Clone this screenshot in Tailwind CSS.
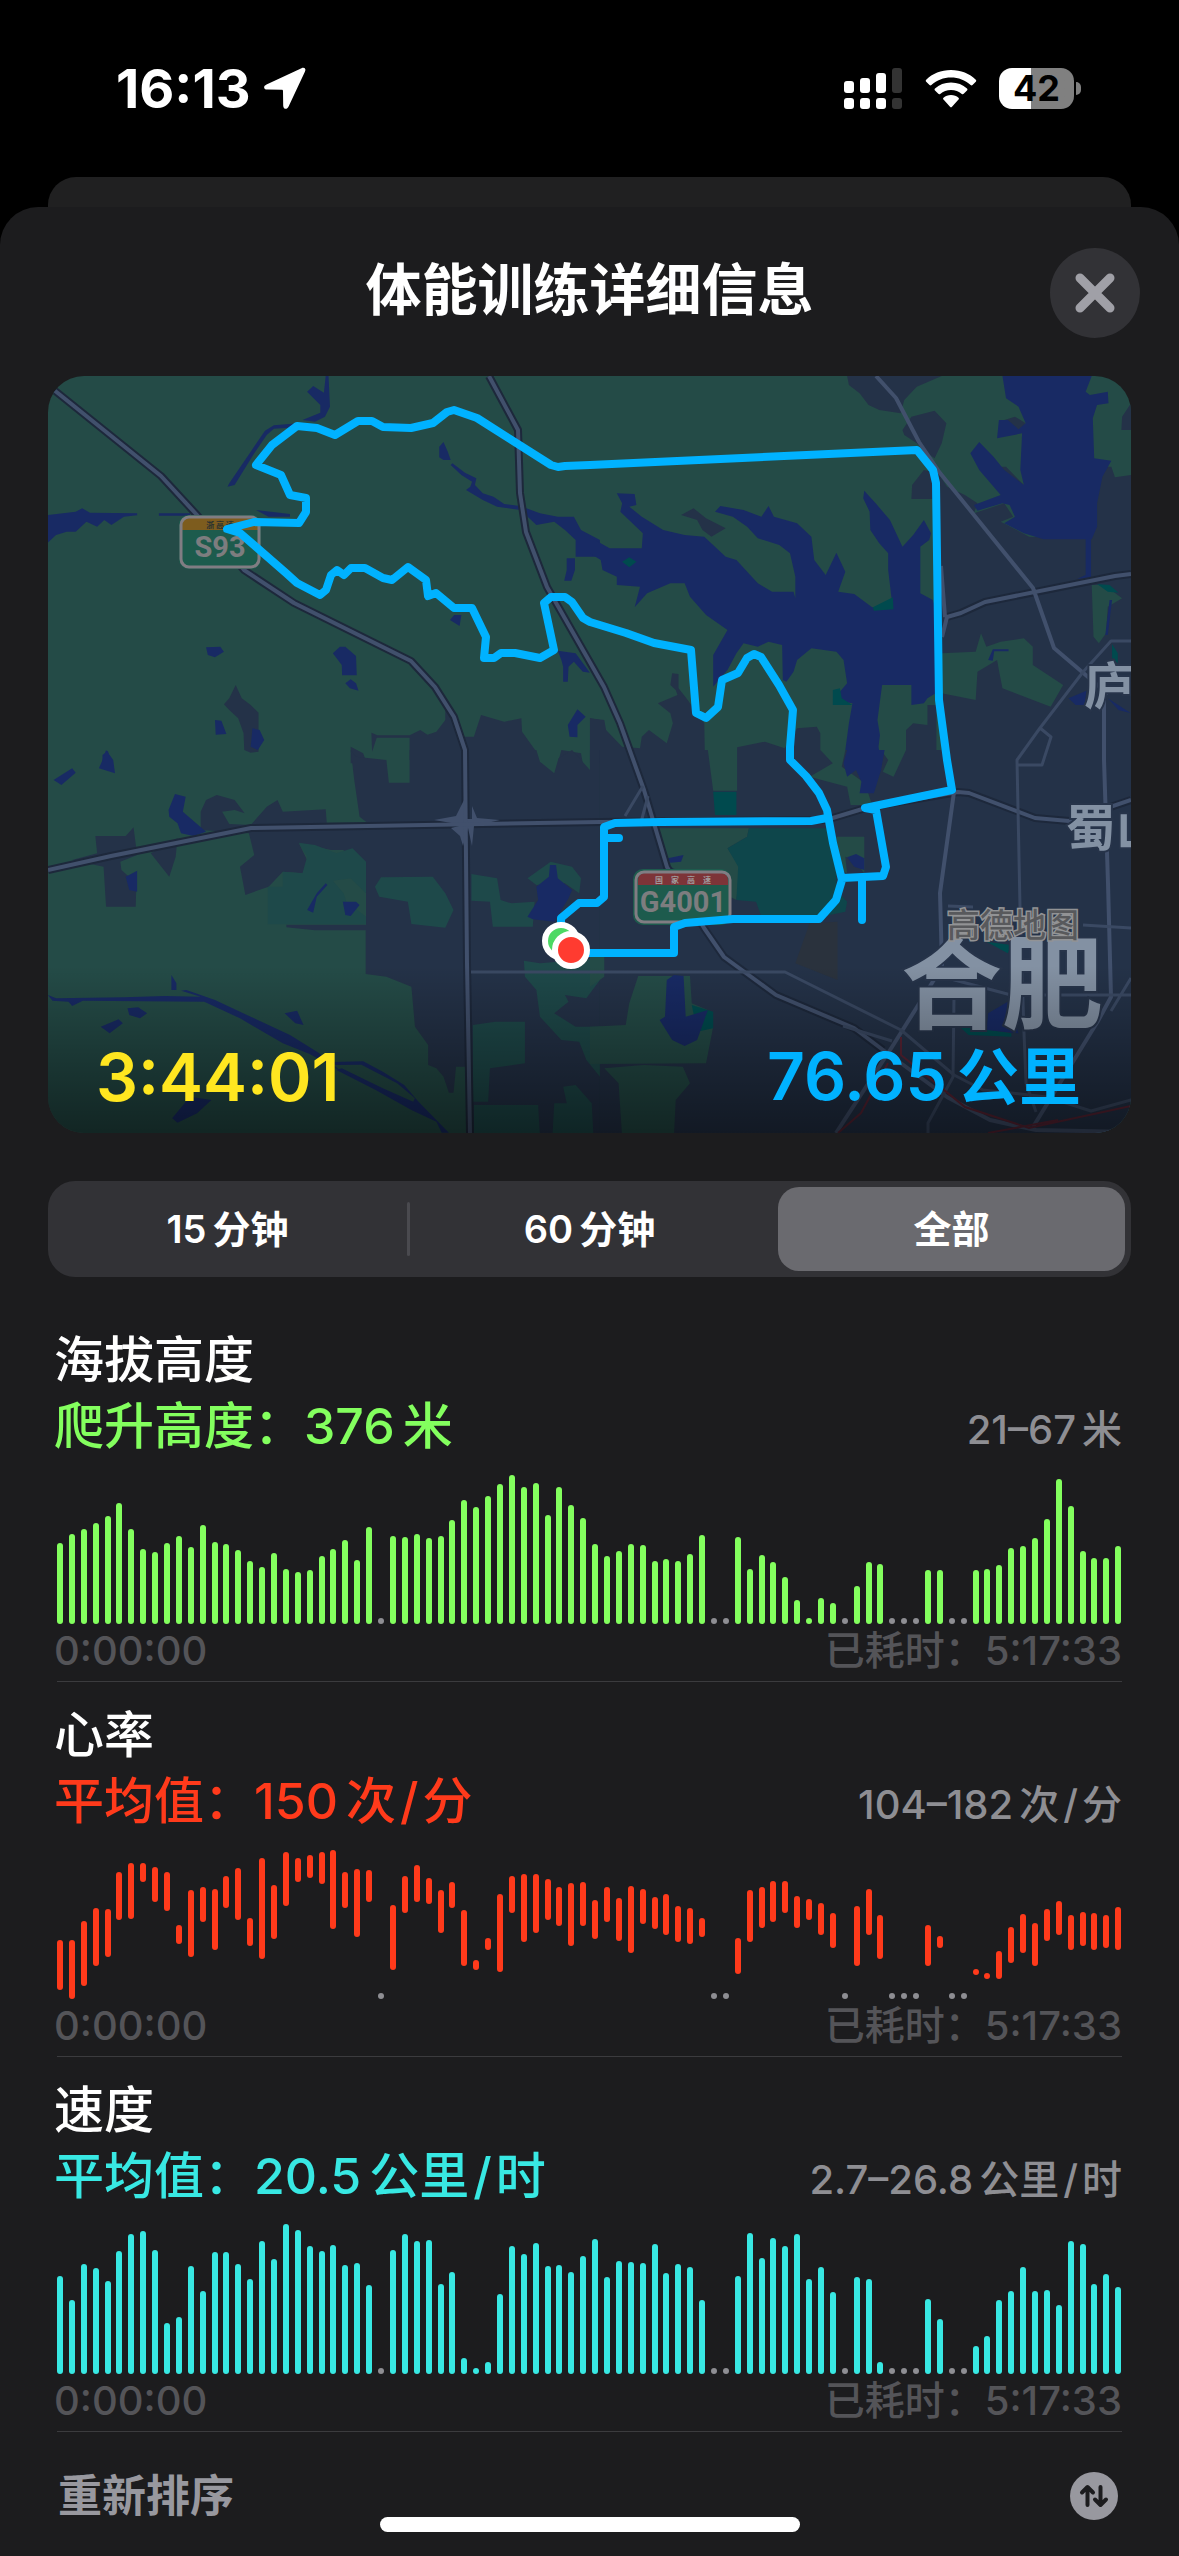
<!DOCTYPE html>
<html lang="zh-CN">
<head>
  <meta charset="UTF-8" />
  <meta name="viewport" content="width=device-width, initial-scale=1.0"/>
  <title>体能训练详细信息</title>
  <script src="https://cdn.jsdelivr.net/npm/@tailwindcss/browser@4"></script>
</head>
<body class="bg-black text-white min-h-screen flex flex-col font-['Inter','Noto_Sans_CJK_SC',sans-serif]">

  <!-- Status bar -->
  <div class="h-[177px] pl-[116px] pr-[98px] flex items-center justify-between">
    <div class="flex items-center gap-3">
      <span class="text-[54px] leading-[60px] font-bold">16:13</span>
      <svg class="w-[43px] h-[43px]" viewBox="0 0 43 43" fill="#fff"><path d="M38.500 1.200 L3.500 17.500 C0 19.200 .5 22.500 4.200 22.600 L18.500 22.800 C19.600 22.800 20 23.200 20 24.300 L20.200 38.500 C20.300 42.500 24 43 25.600 39.500 L42 4.500 C43.300 1.500 41.200 0 38.500 1.200z"/></svg>
    </div>
    <div class="flex items-center gap-[22px]">
      <svg class="w-[59px] h-[41px]" viewBox="0 0 59 41" fill="#fff">
        <rect x="0" y="13" width="10" height="12" rx="3"/><rect x="16" y="10" width="10" height="15" rx="3"/><rect x="32" y="5" width="10" height="20" rx="3"/>
        <rect x="48" y="0" width="10" height="25" rx="3" fill="#333"/>
        <rect x="0" y="30" width="10" height="11" rx="3"/><rect x="16" y="30" width="10" height="11" rx="3"/><rect x="32" y="30" width="10" height="11" rx="3"/>
        <rect x="48" y="30" width="10" height="11" rx="3" fill="#333"/>
      </svg>
      <svg class="w-[52px] h-[38px]" viewBox="0 0 52 38" fill="#fff">
        <path d="M26 0 C36 0 44.500 3.500 50.800 9.800 C51.400 10.400 51.400 11.200 50.800 11.800 L47.500 15 C46.900 15.600 46.200 15.600 45.600 15 C40 10 33.500 7.500 26 7.500 C18.500 7.500 12 10 6.400 15 C5.800 15.600 5.100 15.600 4.500 15 L1.200 11.800 C.6 11.200 .6 10.400 1.200 9.800 C7.500 3.500 16 0 26 0z"/>
        <path d="M26 12.500 C32.500 12.500 37.800 14.700 42 18.600 C42.600 19.200 42.600 20 42 20.600 L38.700 23.800 C38.100 24.400 37.400 24.400 36.800 23.900 C33.800 21.300 30.200 19.900 26 19.900 C21.800 19.900 18.200 21.300 15.200 23.900 C14.600 24.400 13.900 24.400 13.300 23.800 L10 20.600 C9.400 20 9.400 19.200 10 18.600 C14.200 14.700 19.500 12.500 26 12.500z"/>
        <path d="M26 25 C29 25 31.500 26 33.500 27.700 C34.100 28.300 34.100 29 33.500 29.600 L27 36.800 C26.400 37.500 25.600 37.500 25 36.800 L18.500 29.600 C17.900 29 17.900 28.300 18.500 27.700 C20.500 26 23 25 26 25z"/>
      </svg>
      <div class="flex items-center gap-0.5">
        <div class="w-[75px] h-[41px] rounded-[13px] bg-linear-to-r from-white from-43% to-[#808080] to-43% flex items-center justify-center text-black text-[36px] leading-[41px] font-bold">42</div>
        <div class="w-[5px] h-[13px] rounded-r-full bg-[#808080]"></div>
      </div>
    </div>
  </div>

  <!-- Sheet behind -->
  <div class="h-[30px] mx-12 rounded-t-[28px] bg-[#202021]"></div>

  <!-- Workout sheet -->
  <div class="grow rounded-t-[38px] bg-[#1c1c1e] pb-9">
    <header class="grid grid-cols-[1fr_auto_1fr] items-center px-[39px] pt-[41px] pb-[38px]">
      <h1 class="col-start-2 pb-1.5 text-[56px] leading-[80px] font-bold">体能训练详细信息</h1>
      <button type="button" aria-label="关闭" class="justify-self-end size-[90px] rounded-full bg-[#323236] flex items-center justify-center">
        <svg class="size-[40px]" viewBox="0 0 40 40" fill="none" stroke="#a0a0a7" stroke-width="9" stroke-linecap="round"><path d="M5 5 35 35M35 5 5 35"/></svg>
      </button>
    </header>

    <main class="px-12">
      <!-- Route map -->
      <div class="relative aspect-[1083/757] rounded-[36px] overflow-hidden bg-[#244b47]">
        <svg class="block w-full h-full" viewBox="0 0 1083 757" preserveAspectRatio="xMidYMid slice">
          <defs>
            <linearGradient id="shade" x1="0" y1="0" x2="0" y2="1">
              <stop offset="0" stop-color="#000" stop-opacity="0"/>
              <stop offset="1" stop-color="#000" stop-opacity=".5"/>
            </linearGradient>
          </defs>

          <!-- north-west tile -->
          <g transform="translate(-8 -6) scale(.3571 .3333)">
            <path fill="#243248" d="M548 945 530 985 515 1003 530 1020 555 1045 570 1090 572 1140 590 1148 612 1145 612 1028 590 1005 565 985zM928 1088 945 1096 1035 1096 1065 1080 1085 1094 1110 1085 1135 1050 1135 1020 1160 1050 1170 1100 1215 1100 1235 1035 1300 1055 1348 1045 1350 1085 1390 1145 1390 1170H1035V1103H943L930 1145zM870 1130 905 1150 915 1180 870 1180zM1540 1045 1568 1050V1180H1540zM1450 1180 1460 1140 1515 1150 1520 1180z"/>
            <g fill="#182a64">
              <path d="M22 435 100 425 118 415 140 428 272 430 272 436 235 440 200 465 180 450 160 470 130 455 100 485 75 485 45 495 22 518zM333 430H420V437H333zM605 420 700 432 700 440 640 440zM800 18H808L812 110 798 140 770 155 735 150 785 128 785 105 748 65 765 48 795 68z"/>
              <path d="M1118 230 1130 216 1142 245 1150 270 1130 270 1118 262zM1193 360 1205 350 1210 335 1180 315 1150 285 1155 280 1190 308 1222 325 1218 345 1240 370 1270 380 1300 402 1345 408 1400 430 1450 440 1495 440 1515 480 1568 510V560H1500V510L1470 480 1440 455 1390 465 1370 445 1345 420 1280 410 1240 390zM1475 565H1498V600L1488 632H1468L1475 600z"/>
              <path d="M1148 750 1175 768 1180 735 1160 735zM465 832 505 830 515 845 490 862 470 855zM820 850 840 830 855 830 885 858 887 916 846 916 845 885zM855 940 870 928 885 940 892 962 868 955zM1450 842 1500 850 1540 908 1520 905 1495 875 1480 890 1478 935 1465 935 1465 890 1460 870zM1478 1065 1505 1018 1528 1040 1505 1065 1505 1102 1483 1100zM490 1050 508 1052 522 1092 492 1094zM595 1075 615 1080 628 1110 610 1140 590 1130zM175 1155 190 1142 200 1180H175z"/>
              <path d="M740 158 L720 172 655 176 635 195 600 250 545 345 525 350 530 340 590 245 630 182 655 166z"/>
            </g>
          </g>

          <!-- north-east tile -->
          <g transform="translate(542 -6) scale(.3571 .3333)">
            <path fill="#243248" d="M720 18 725 45 755 70 780 105 810 120 870 130 880 90 915 50 985 18zM875 180 900 140 965 122 998 160 985 220 965 265 945 250 915 220 880 195zM935 300 902 345 900 387 970 387 970 1170H1515V315L1470 322 1460 290 1400 290 1400 508 1230 500 1150 455 1185 440 1160 400 1075 430 1085 400 1050 375 1000 350 975 310zM1160 150 1200 190 1220 160 1190 140zM1488 180 1490 140 1515 100V180zM1135 290 1165 290 1215 345 1205 360zM255 435 290 415 325 445 380 475 340 500 315 480 300 450zM0 1045 40 1050 45 1080 90 1130 140 1135 145 1100 165 1080 215 1120 232 1060 225 1030 190 1000 245 975 240 960 225 945 230 910 248 912 248 955 270 985 320 1060 322 1180H0zM412 1180V1132L490 1115 545 1135 580 1075 635 1070 645 1090 645 1180zM885 1180V1080L905 1060 945 1065 945 1005H985V1180z"/>
            <path fill="#244b47" d="M985 850 1080 845 1095 790 1110 830 1150 815 1215 805 1240 830 1240 885 1325 945 1290 1010 1155 955 1145 900 1140 870 1085 905 1080 990 985 970zM1405 645H1440L1490 685 1450 710 1445 790 1425 820 1410 800z"/>
            <g fill="#182a64">
              <path d="M0 502 55 535 145 535 148 490 85 425 90 400 75 370 125 372 130 405 110 410 145 440 205 480 265 495 320 500 380 560 410 570 470 640 510 665 570 665 575 685 575 620 560 550 530 525 470 505 440 470 400 440 350 425 365 408 430 420 480 440 500 408 515 440 580 460 620 500 628 570 660 615 690 548 715 605 695 665 740 672 790 712 830 710 845 690 835 600 835 550 810 520 785 480 783 425 765 385 768 362 800 400 840 450 875 530 905 495 935 450 955 490 950 510 925 530 925 670 960 690 975 740 975 965 945 985 935 1000 900 1005 900 945 818 945 805 1050 812 1095 808 1130 815 1180H710L725 1060 735 1000 680 990 720 940 710 870 690 845 620 835 580 870 570 905 550 935 540 930 538 825 500 815 470 830 430 820 410 850 385 900 345 950 345 855 385 780 325 735 280 680 265 640 225 640 160 670 125 712 140 650 75 645 75 620 35 600 30 570 0 550z"/>
              <path d="M1155 18H1405L1388 65 1400 75 1450 65 1452 100 1420 105 1408 145 1412 265 1460 272 1435 320 1420 400 1420 470 1405 508H1403V626H1365L1388 615V508H1270L1215 490 1160 460 1190 440 1175 405 1155 400 1085 422 1075 405 1150 375 1090 300 1065 250 1090 216 1130 260 1160 300 1215 345 1205 300 1210 190 1140 205 1145 150 1170 150 1200 178 1220 160 1200 110 1165 85z"/>
              <path d="M1340 985 1390 962 1385 1005 1360 1005zM1450 985 1515 1030 1480 1020zM1455 690H1462L1450 795H1443zM1115 870 1128 838H1172V844H1132L1128 872z"/>
            </g>
            <path fill="#004a4e" d="M90 575 110 562 130 575 110 592zM792 712 848 682 850 718 795 722zM680 960 700 955 705 985 735 1005 680 1005zM1462 822 1478 850 1478 880 1462 865zM1420 642 1455 645 1480 668 1450 665z"/>
          </g>

          <!-- south-west tile -->
          <g transform="translate(-8 374) scale(.3571 .3333)">
            <path fill="#243248" d="M870 0 885 20 970 30 977 98H1035V0H1390L1400 35 1440 70 1452 25 1490 0 1540 60V0H1568V1160H1195V950H1165L1158 1028H1145L1130 980 1110 955 1087 945 1087 885 1050 830 1040 710 970 680 912 672V541H770L690 532V524H913V215L895 200 880 90zM450 185 465 150 495 135 545 150 573 190 545 180 510 185 530 222 590 225 635 170 665 150 680 185 800 178 803 218 913 218 913 430 850 300 815 300 725 280 748 330 740 370 680 365 640 410 575 435 560 350 600 315 585 250 450 240zM90 330 160 310 155 258H240L262 232 272 315 225 335 228 360 270 400 268 470H185L178 350zM310 310 385 265 380 320 362 380z"/>
            <path fill="#1e494a" d="M725 278 770 285 830 310 875 295 913 335V430L870 385 820 392 850 430 858 455 913 500V523H638V410H680V365L735 370 748 320zM938 410 955 382 1100 380 1135 430 1158 480 1135 533 1040 522 1030 455 950 440zM1208 372 1280 385 1290 450 1320 460 1385 455 1380 530H1268L1260 455 1208 452zM1365 385 1430 335 1490 350 1515 385 1510 430 1470 400 1390 405zM1355 632 1400 640 1568 625V690L1530 745 1470 735 1480 755 1440 790 1500 830 1568 830V980L1530 930 1510 875 1460 870 1400 800 1390 720 1358 680zM1212 825 1275 815H1358V940L1260 955 1255 1055H1212zM1215 1065H1395L1400 1160H1215zM1440 1060 1475 1060 1465 1010 1500 1005 1545 1060 1550 1160H1435z"/>
            <g fill="#182a64">
              <path d="M360 180 378 132 408 140 400 185 465 245 430 258 395 250 385 220 362 200zM240 380 272 362 272 425 250 420zM185 0 205 30 210 70 165 55 175 30zM38 90 90 55 100 68 60 105zM748 480 775 430 800 400 805 405 775 440 765 488zM848 455H885L895 465 870 498 855 495zM1365 500 1395 450 1390 410 1425 380 1428 345 1445 345 1450 385 1490 420 1480 445 1440 515 1380 508z"/>
              <path d="M22 735 45 745 235 742 350 738 450 740 395 722 410 720 490 750 590 800 700 855 780 908 845 965 755 912 680 880 560 805 460 755 120 752 90 768 80 755 35 752zM245 775 275 772 300 790 280 805 250 795zM170 830 220 808 232 820 195 850zM685 790 720 782 738 825 715 820zM370 1105 420 1040 480 1050 440 1090 385 1118zM368 675 382 700 382 720 368 720z"/>
              <path d="M820 936 905 934 960 965 1020 1005 1060 1055 1145 1148 1125 1148 1110 1115 1040 1080 940 1020 830 960 845 955 960 1015 1045 1055 1050 1045 1000 1000 900 944 825 945z"/>
            </g>
          </g>

          <!-- south-east tile -->
          <g transform="translate(542 374) scale(.3571 .3333)">
            <path fill="#243248" d="M28 0H1520V1160H28z"/>
            <path fill="#244b47" d="M330 0H412V122H345zM645 0H715L705 50 770 100 790 165 730 165 720 110 615 80 680 40zM815 0H885L850 80 820 65 835 30zM190 235H445L440 260 385 295 420 350 410 450 225 350zM690 260H768V370L740 330 715 320 720 370 700 360zM0 620H40V680L0 710zM135 678H280L285 760 330 780 345 830 325 940 0 942V830L100 825 110 760zM40 955 150 945 260 950 280 1000 240 1050 235 1160H90L80 1000z"/>
            <path fill="#0e464b" d="M445 235H665L690 370 690 420 720 455 715 485 660 497 480 500 465 455 410 450 415 350 385 295 440 260z"/>
            <path fill="#004a4e" d="M345 125H410V195H350zM1110 575 1180 585 1170 610zM1030 825 1180 850V860L1060 855zM285 765 345 785V835L300 845z"/>
            <path fill="#182a64" d="M215 690 235 675 262 678 268 800 330 780 300 870 265 888 230 870 195 810 210 800zM720 0H825L815 60 795 130 755 130 760 95 745 60 720 80 710 40zM720 322 745 312 768 325V360L740 350zM218 325 262 315 255 335 225 338zM1115 790 1170 755 1200 850 1110 840z"/>
            <path fill="#2a323d" d="M615 520 693 515V690L575 640z"/>
          </g>

          <!-- roads -->
          <g fill="none" stroke="#1d283b" stroke-width="8" stroke-linejoin="round">
            <path d="M6 14 113 100 149 139 196 194 246 227 363 285 387 311 406 341 417 374 419 587 422 757"/>
            <path d="M441 0 470 54 472 117 478 156 499 211 556 311 572 347 596 414 619 491 656 552 676 581 728 619 806 652 835 674"/>
            <path d="M0 494 63 480 203 452 552 446 778 444 821 431 910 416 921 417 987 442 1021 445 1083 424M1083 198 1067 200 937 226 913 237 899 241"/>
          </g>
          <path fill="#41506c" d="M386 444 408 440 416 424V443H424V430L429 442 452 444 426 450 424 470 420 452 415 470 412 460 403 452 415 449z"/>
          <g fill="none" stroke="#41506c" stroke-linejoin="round" stroke-width="4">
            <path d="M6 14 113 100 149 139 196 194 246 227 363 285 387 311 406 341 417 374 419 587 422 757"/>
            <path d="M441 0 470 54 472 117 478 156 499 211 556 311 572 347 596 414 619 491 656 552 676 581 728 619 806 652 835 674 899 721 942 744 988 754 1083 756"/>
            <path d="M0 494 63 480 203 452 552 446 778 444 821 431 910 416 921 417 987 442 1021 445 1083 424"/>
            <path d="M828 0 848 22 871 66 892 97 985 212 1006 272 1060 318M1083 198 1067 200 937 226 913 237 899 241 894 261M893 190 897 241"/>
            <path d="M906 416 892 517 894 591 844 671 788 757M1056 322 1056 384 1060 507 1063 621 1050 645 985 751"/>
          </g>
          <g fill="none" stroke="#3a4963" stroke-linejoin="round" stroke-width="3">
            <path d="M423 596H737L853 654 906 699 935 714 999 721 1043 735 1083 724"/>
            <path d="M1083 265H1063L1035 296 992 352 969 384 972 531 976 657 978 707 988 736M992 352 1003 361 994 389H969"/>
            <path d="M1035 549 1083 552M899 602 963 619 1083 619M906 621 905 701 880 747V757M795 650 844 665M595 410 577 440M600 420 592 450M900 530 925 531M1083 602 1063 635"/>
          </g>
          <path fill="none" stroke="#5a2435" stroke-width="2" d="M853 661V679L917 731 981 752 1083 730M840 687 813 737 790 757M940 757 1010 744"/>

          <!-- place names -->
          <g fill="#8391a3" stroke="#27344a" stroke-width="4" paint-order="stroke" font-family="'Noto Sans CJK SC',sans-serif" font-weight="700">
            <text x="1036" y="328" font-size="50">庐</text>
            <text x="1018" y="470" font-size="50">蜀山</text>
            <text x="853" y="645" font-size="101">合肥</text>
          </g>

          <!-- highway shields -->
          <g font-family="'Liberation Sans Narrow',Roboto,sans-serif" font-weight="700" fill="#7d7d7f" text-anchor="middle">
            <rect x="131" y="139" width="82" height="54" rx="9" fill="#1d5b4d"/>
            <path fill="#7d5c1e" d="M134 154v-5q0-7 8-7h60q8 0 8 7v5z"/>
            <rect x="133" y="141" width="78" height="50" rx="8" fill="none" stroke="#817d83" stroke-width="3"/>
            <text x="172" y="181" font-size="29">S93</text>
            <text x="172" y="152" font-size="8" fill="#2b332f" font-family="'Noto Sans CJK SC',sans-serif">浙 高 速</text>
            <rect x="585" y="493" width="98" height="56" rx="10" fill="#1d5b4d"/>
            <path fill="#7d3438" d="M590 509v-5q0-7 8-7h74q8 0 8 7v5z"/>
            <rect x="588" y="496" width="94" height="50" rx="8" fill="none" stroke="#817d83" stroke-width="3"/>
            <text x="635" y="536" font-size="29">G4001</text>
            <text x="635" y="507" font-size="8" fill="#a09a9c" font-family="'Noto Sans CJK SC',sans-serif">国　家　高　速</text>
          </g>

          <rect y="590" width="1083" height="167" fill="url(#shade)"/>
          <text x="899" y="561" font-size="33" font-weight="500" fill="#58595c" stroke="#929395" stroke-width="3" paint-order="stroke" font-family="'Noto Sans CJK SC',sans-serif">高德地图</text>

          <!-- route -->
          <g fill="none" stroke="#00b2ff" stroke-width="8" stroke-linejoin="round" stroke-linecap="round">
            <path d="M523 577H626V551L637 547 685 543H771L788 524 794 504 785 467 779 434 771 417 758 400 742 384V371L745 334 731 309 713 281 706 278 699 282 690 297 674 304 670 331 658 342 648 337 643 274 606 267 578 257 542 246 535 242 524 226 517 221H503L496 227 506 274 492 282 467 277H453L446 282H436L438 261 424 232H406L388 217 380 220 378 204 360 191 344 204 335 202 317 192H303L296 199 289 194 283 199 278 214 272 219 249 207 238 197 192 157 179 153 206 146 251 147 258 136V122L242 119 233 99 208 89 224 69 249 50 269 52 287 59 310 45H324L335 51 363 52 385 47 399 36 406 34 429 42 503 89 510 91 517 90 542 89 869 74 885 94 888 107 891 324 899 384 904 414 817 432 828 434 838 491 835 500 794 502"/>
            <path d="M814 502V544M779 442 763 445 613 446 567 447 556 451V521L549 527H531L513 542V560M556 462H571"/>
          </g>
          <circle cx="513" cy="565" r="16" fill="#4cd964" stroke="#fff" stroke-width="6"/>
          <circle cx="523" cy="574" r="16" fill="#ff3b30" stroke="#fff" stroke-width="6"/>
        </svg>

        <div class="absolute inset-x-12 bottom-[22px] flex items-center justify-between text-[66px] leading-[66px] font-semibold">
          <span class="text-[#ffe620]">3:44:01</span>
          <span class="pr-0.5 text-[#00b2ff]">76.65<span class="ml-2.5 text-[62px] font-bold">公里</span></span>
        </div>
      </div>

      <!-- Time range -->
      <div class="mt-12 mb-[30px] h-24 p-1.5 rounded-[27px] bg-[#323236] flex items-center text-[38px] font-semibold">
        <button type="button" class="flex-1 h-full rounded-[21px]">15<span class="ml-1.5">分钟</span></button>
        <div class="w-[3px] h-[54px] mx-1.5 rounded-full bg-[#4a4a4f]"></div>
        <button type="button" class="flex-1 h-full rounded-[21px]">60<span class="ml-1.5">分钟</span></button>
        <div class="w-[15px]"></div>
        <button type="button" aria-pressed="true" class="flex-1 h-full rounded-[21px] bg-[#6a6a6f]">全部</button>
      </div>

      <!-- Altitude -->
      <section class="mx-[9px] pt-5 border-b border-[#3b3b3e] font-medium">
        <h2 class="-ml-[3px] text-[50px] leading-[66px]">海拔高度</h2>
        <div class="-ml-[3px] flex items-center justify-between">
          <p class="text-[50px] leading-[66px] text-[#83ff5e]">爬升高度：376<span class="ml-2">米</span></p>
          <p class="pt-2 text-[40px] leading-[58px] text-[#8e8e93]">21–67<span class="ml-1.5">米</span></p>
        </div>
        <div id="altitude" class="mt-[15px] h-[150px] flex items-end justify-between"></div>
        <div class="-ml-[3px] pb-[3px] flex justify-between text-[40px] leading-[54px] text-[#545458]"><span>0:00:00</span><span>已耗时：5:17:33</span></div>
      </section>

      <!-- Heart rate -->
      <section class="mx-[9px] pt-5 border-b border-[#3b3b3e] font-medium">
        <h2 class="-ml-[3px] text-[50px] leading-[66px]">心率</h2>
        <div class="-ml-[3px] flex items-center justify-between">
          <p class="text-[50px] leading-[66px] text-[#ff3a1b]">平均值：150<span class="ml-2">次<span class="mx-1">/</span>分</span></p>
          <p class="pt-2 text-[40px] leading-[58px] text-[#8e8e93]">104–182<span class="ml-1.5">次<span class="mx-1">/</span>分</span></p>
        </div>
        <div id="heartRate" class="mt-[15px] h-[150px] flex items-end justify-between"></div>
        <div class="-ml-[3px] pb-[3px] flex justify-between text-[40px] leading-[54px] text-[#545458]"><span>0:00:00</span><span>已耗时：5:17:33</span></div>
      </section>

      <!-- Speed -->
      <section class="mx-[9px] pt-5 border-b border-[#3b3b3e] font-medium">
        <h2 class="-ml-[3px] text-[50px] leading-[66px]">速度</h2>
        <div class="-ml-[3px] flex items-center justify-between">
          <p class="text-[50px] leading-[66px] text-[#38e8e3]">平均值：20.5<span class="ml-2">公里<span class="mx-1">/</span>时</span></p>
          <p class="pt-2 text-[40px] leading-[58px] text-[#8e8e93]">2.7–26.8<span class="ml-1.5">公里<span class="mx-1">/</span>时</span></p>
        </div>
        <div id="speed" class="mt-[15px] h-[150px] flex items-end justify-between"></div>
        <div class="-ml-[3px] pb-[3px] flex justify-between text-[40px] leading-[54px] text-[#545458]"><span>0:00:00</span><span>已耗时：5:17:33</span></div>
      </section>

      <!-- Reorder -->
      <button type="button" class="w-full pt-10 pl-[10px] pr-[13px] flex items-center justify-between text-[44px] leading-[48px] font-bold text-[#98989f]">
        <span>重新排序</span>
        <svg class="size-12" viewBox="0 0 48 48">
          <circle cx="24" cy="24" r="24" fill="#98989f"/>
          <path d="M17.500 33V15.500M12 20.500l5.500-5.500 5.500 5.500M30.500 15v17.500M25 27.500l5.500 5.500 5.500-5.500" fill="none" stroke="#1c1c1e" stroke-width="4" stroke-linecap="round" stroke-linejoin="round"/>
        </svg>
      </button>
    </main>
  </div>

  <!-- Home indicator -->
  <div class="fixed bottom-6 left-1/2 -translate-x-1/2 w-[420px] h-[15px] rounded-full bg-white"></div>

  <script>
    // one value per slot, 0 = no sample
    const altitude = [
      81, 90, 95, 101, 108, 121, 95, 75, 72, 81, 88, 77, 99, 82, 80, 74, 63, 57, 71, 55, 52, 54, 68, 75, 84, 64, 97, 0, 88, 87,
      90, 86, 88, 104, 124, 117, 128, 140, 149, 137, 141, 109, 137, 119, 106, 80, 68, 73, 80, 79, 63, 65, 63, 70, 89, 0, 0, 87, 55, 69,
      62, 47, 24, 6, 26, 21, 0, 38, 62, 60, 0, 0, 0, 54, 54, 0, 0, 54, 55, 59, 76, 78, 86, 105, 145, 118, 73, 66, 66, 78
    ];

    const speed = [
      98, 74, 110, 106, 93, 123, 140, 143, 124, 51, 57, 108, 83, 122, 122, 110, 95, 133, 115, 150, 144, 128, 123, 129, 109, 111, 89, 0, 124, 140,
      133, 134, 90, 102, 16, 6, 12, 80, 128, 120, 131, 108, 109, 102, 118, 135, 97, 113, 112, 111, 130, 101, 110, 107, 74, 0, 0, 98, 141, 116,
      136, 128, 140, 95, 107, 82, 0, 97, 95, 12, 0, 0, 0, 75, 55, 0, 0, 28, 38, 74, 83, 107, 83, 84, 69, 133, 130, 90, 100, 87
    ];

    // [lowest point, length of the range]
    const heartRate = [
      [9, 50], [0, 59], [13, 65], [33, 58], [42, 48], [79, 48], [80, 56], [117, 19], [97, 35], [88, 39],
      [55, 19], [42, 67], [77, 35], [49, 61], [91, 32], [79, 52], [53, 28], [40, 101], [60, 54], [93, 54],
      [117, 24], [121, 23], [115, 32], [70, 79], [91, 36], [62, 68], [97, 32], 0, [29, 65], [86, 37],
      [97, 37], [95, 26], [66, 43], [91, 26], [33, 56], [29, 10], [49, 12], [27, 78], [86, 37], [57, 68],
      [66, 59], [79, 41], [73, 39], [53, 63], [73, 44], [60, 39], [77, 35], [58, 43], [46, 67], [75, 35],
      [70, 32], [64, 41], [57, 36], [55, 36], [62, 19], 0, 0, [25, 36], [57, 52], [71, 41],
      [77, 41], [86, 32], [71, 32], [79, 21], [64, 32], [51, 35], 0, [33, 60], [64, 46], [40, 44],
      0, 0, 0, [33, 41], [51, 12], 0, 0, [24, 6], [20, 6], [20, 28],
      [36, 36], [46, 39], [33, 43], [58, 32], [64, 34], [49, 35], [53, 34], [49, 37], [51, 33], [49, 43]
    ];

    function drawChart(id, data, barClass) {
      const chart = document.getElementById(id);
      data.forEach(item => {
        const bar = document.createElement("div");
        if (!item) {
          bar.className = "w-1.5 h-1.5 rounded-full bg-[#8e8e93]";
        } else {
          const [low, length] = Array.isArray(item) ? item : [0, item];
          bar.className = barClass;
          bar.style.height = `${length}px`;
          bar.style.marginBottom = `${low}px`;
        }
        chart.appendChild(bar);
      });
    }

    drawChart("altitude", altitude, "w-1.5 rounded-full bg-[#83ff5e]");
    drawChart("heartRate", heartRate, "w-1.5 rounded-full bg-[#ff3a1b]");
    drawChart("speed", speed, "w-1.5 rounded-full bg-[#38e8e3]");
  </script>
</body>
</html>
